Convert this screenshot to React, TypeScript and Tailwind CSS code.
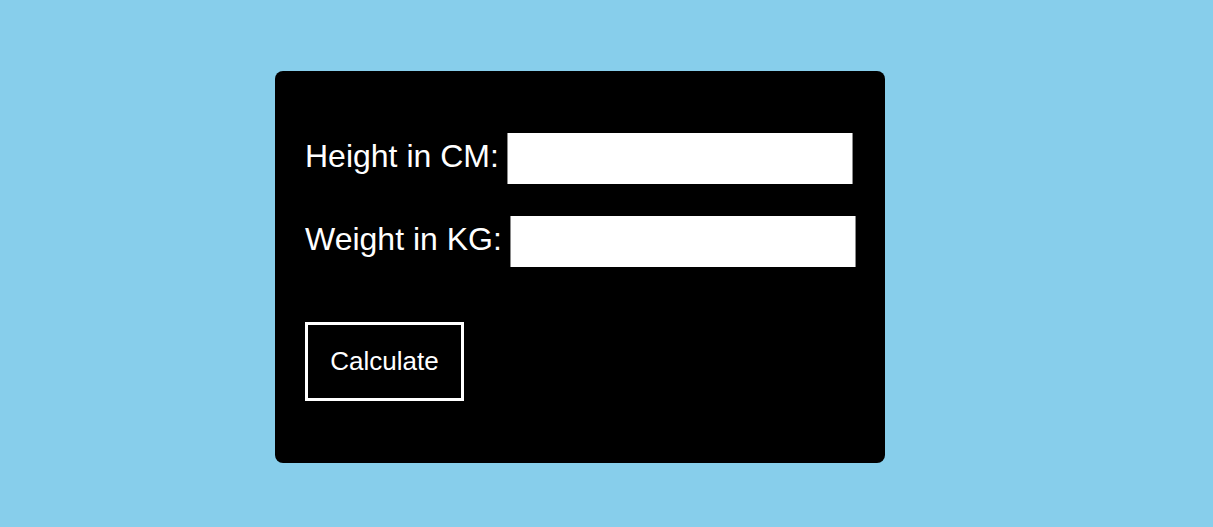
export default function App() {
  return (
    <div className="w-full h-[527px] bg-[#87ceeb] pt-[71px] pl-[275px]" style={{ fontFamily: '"Liberation Sans", Arial, sans-serif' }}>
      <div className="w-[610px] h-[392px] bg-black rounded-lg px-[30px] pt-[62px] flex flex-col">
        <div className="flex items-start h-[51px]">
          <span className="text-white text-[32px] leading-none whitespace-nowrap shrink-0 mt-[7px]">Height in CM:</span>
          <div className="w-[8px] shrink-0" />
          <div className="w-[346px] h-[51px] shrink-0 bg-white border-x border-[#8a8a8a]" />
        </div>
        <div className="flex items-start h-[51px] mt-[32px]">
          <span className="text-white text-[32px] leading-none whitespace-nowrap shrink-0 mt-[7px]">Weight in KG:</span>
          <div className="w-[8px] shrink-0" />
          <div className="w-[346px] h-[51px] shrink-0 bg-white border-x border-[#8a8a8a]" />
        </div>
        <div className="mt-[55px]">
          <button className="w-[159px] h-[79px] border-[3px] border-white bg-black text-white text-[26px] flex items-center justify-center">
            Calculate
          </button>
        </div>
      </div>
    </div>
  );
}
